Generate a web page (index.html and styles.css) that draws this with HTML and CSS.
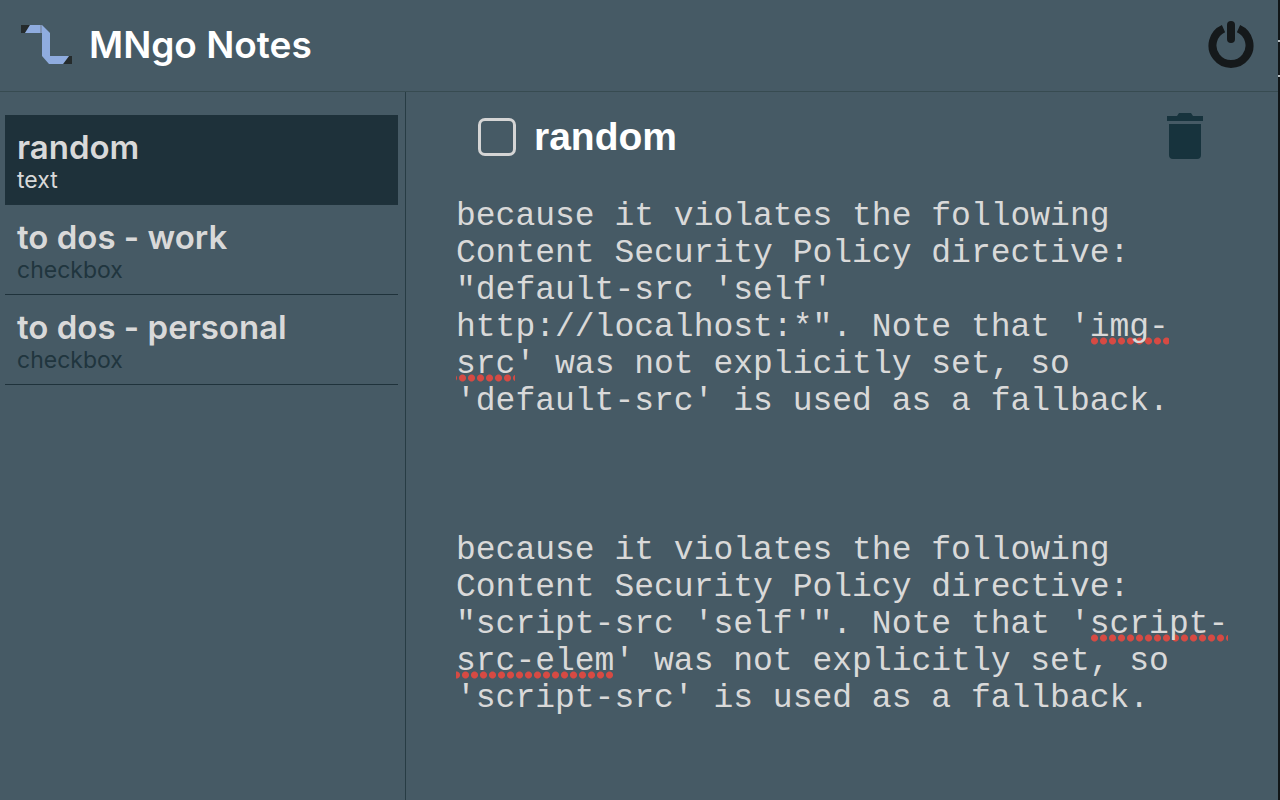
FILE: index.html
```html
<!DOCTYPE html>
<html lang="en">
<head>
<meta charset="utf-8">
<meta name="viewport" content="width=device-width, initial-scale=1">
<title>MNgo Notes</title>
<link rel="stylesheet" href="styles.css">
</head>
<body>
<div class="app">
  <header class="topbar">
    <svg class="logo" viewBox="0 0 52 42" aria-hidden="true">
      <path class="logo-end" d="M0 1h9L4 9H0zM51 32v8h-9l6-8z"/>
      <path class="logo-band" d="M9 1h12l8 8v23h19l-6 8H28l-7-8V9H4z"/>
      <path class="logo-fold" d="M19 1h2v8h-2z"/>
    </svg>
    <h1 class="brand">MNgo Notes</h1>
    <button class="icon-button power" type="button" aria-label="Log out">
      <svg viewBox="0 0 46 48" aria-hidden="true">
        <path d="M15.500 7.600A18.500 18.500 0 1 0 30.500 7.600" class="power-ring"/>
        <path d="M23 4v14" class="power-bar"/>
      </svg>
    </button>
  </header>
  <div class="columns">
    <nav class="sidebar" aria-label="Notes">
      <button class="note selected" type="button"><span class="note-title">random</span><span class="note-kind">text</span></button>
      <button class="note" type="button"><span class="note-title">to dos - work</span><span class="note-kind">checkbox</span></button>
      <button class="note" type="button"><span class="note-title">to dos - personal</span><span class="note-kind">checkbox</span></button>
    </nav>
    <main class="editor">
      <div class="editor-head">
        <input class="tick" type="checkbox" id="done" aria-label="Mark note">
        <input class="title-field" type="text" value="random" aria-label="Note title" spellcheck="false">
        <button class="icon-button trash" type="button" aria-label="Delete note">
          <svg viewBox="0 0 38 48" aria-hidden="true">
            <path d="M1 3h10l2-3h12l2 3h10v5H1zM3 11h32v31q0 4-4 4H7q-4 0-4-4z"/>
          </svg>
        </button>
      </div>
      <div class="note-body" contenteditable="true" role="textbox" aria-multiline="true" aria-label="Note text" spellcheck="false">
        <p>because it violates the following Content Security Policy directive: "default-src 'self' http://localhost:*". Note that '<span class="misspelt">img-src</span>' was not explicitly set, so 'default-src' is used as a fallback.</p>
        <p>because it violates the following Content Security Policy directive: "script-src 'self'". Note that '<span class="misspelt">script-src-elem</span>' was not explicitly set, so 'script-src' is used as a fallback.</p>
      </div>
    </main>
  </div>
</div>
</body>
</html>
```
FILE: styles.css
```css
* { box-sizing: border-box; }

body {
  margin: 0;
  background: #465a65;
  color: #d9d9d9;
  font-family: Inter, "Liberation Sans", sans-serif;
}

.app {
  display: flex;
  flex-direction: column;
  min-height: 100vh;
  padding-right: 2px;
  background:
    linear-gradient(#b8bec0, #b8bec0) right 40px / 2px 2px no-repeat,
    linear-gradient(#b8bec0, #b8bec0) right 75px / 2px 2px no-repeat,
    linear-gradient(#111618, #111618) right top / 2px 100% no-repeat;
}

.topbar {
  display: flex;
  align-items: center;
  height: 92px;
  padding: 0 24px 2px 21px;
  border-bottom: 1px solid #374b51;
}

.logo { width: 52px; height: 42px; }
.logo-band { fill: #8facdf; }
.logo-end { fill: #252b2c; }
.logo-fold { fill: #7f93b5; }

.brand {
  flex: 1;
  margin: 0 0 0 16px;
  color: #fff;
  font-size: 37px;
  line-height: 48px;
  font-weight: 600;
}

.icon-button {
  display: flex;
  padding: 0;
  border: 0;
  background: none;
  cursor: pointer;
}

.power svg { width: 46px; height: 48px; }
.power-ring { fill: none; stroke: #15191b; stroke-width: 8; }
.power-bar { fill: none; stroke: #15191b; stroke-width: 8; stroke-linecap: round; }

.columns { display: flex; flex: 1; }

.sidebar {
  flex: 0 0 406px;
  padding: 23px 7px 0 5px;
  border-right: 1px solid #273c44;
}

.note {
  display: block;
  width: 100%;
  padding: 12px 12px 11px;
  border: 0;
  border-bottom: 1px solid #1f323b;
  background: none;
  color: #20353e;
  font-family: inherit;
  text-align: left;
  cursor: pointer;
}

.note.selected { background: #1e313a; color: #d9d9d9; }

.note-title {
  display: block;
  color: #d9d9d9;
  font-size: 33px;
  line-height: 40px;
  font-weight: 600;
}

.note-kind {
  display: block;
  font-size: 23px;
  line-height: 26px;
}

.editor {
  flex: 1;
  min-width: 0;
  padding: 19px 44px 0 50px;
}

.editor-head {
  display: flex;
  align-items: center;
  padding: 0 30px 0 22px;
}

.tick {
  appearance: none;
  width: 38px;
  height: 38px;
  margin: 0;
  border: 3px solid #d5d5d5;
  border-radius: 7px;
}

.title-field {
  flex: 1;
  min-width: 0;
  margin-left: 18px;
  padding: 0;
  border: 0;
  outline: 0;
  background: none;
  color: #fff;
  font: bold 39px/52px "Liberation Sans", sans-serif;
}

.trash svg { width: 38px; height: 48px; fill: #17333d; }

.note-body {
  display: grid;
  gap: 112px;
  margin-top: 35px;
  outline: 0;
  font-family: "Liberation Mono", monospace;
  font-size: 33px;
  line-height: 37px;
}

.note-body p { margin: 0; }

.misspelt {
  background: radial-gradient(circle, #d64a43 3px, transparent 4px) left calc(100% - 1px) / 9px 8px repeat-x;
}
```
